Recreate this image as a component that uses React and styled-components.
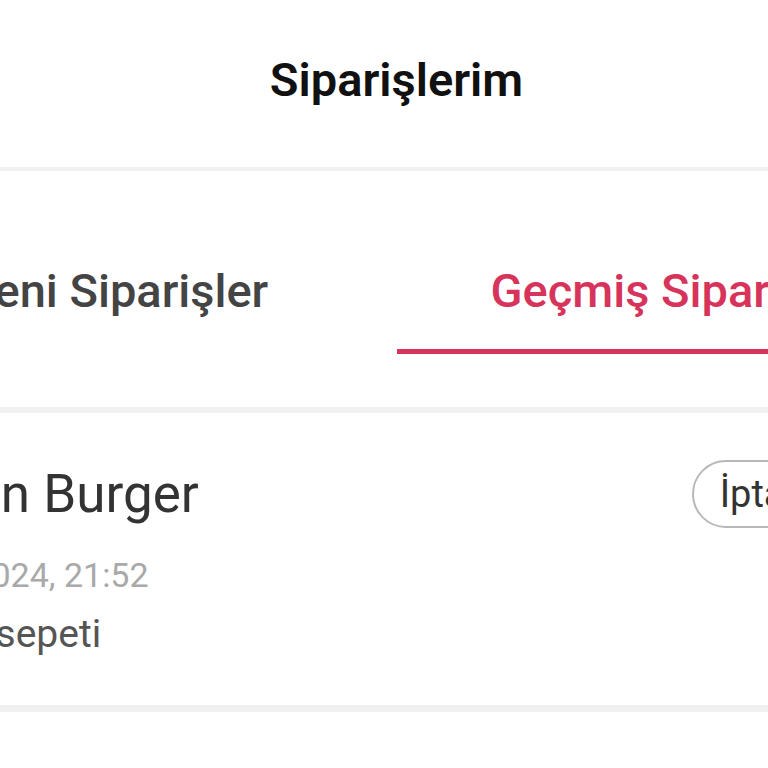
import React from 'react';
import styled, { createGlobalStyle } from 'styled-components';

const Global = createGlobalStyle`
    html, body {
        margin: 0;
        padding: 0;
        background: #ffffff;
        overflow: hidden;
    }
    body {
        font-family: Roboto, "Liberation Sans", sans-serif;
    }
`

// the screen is wider than the window, we only see the middle of it
const Screen = styled.div`
    width: 1115px;
    margin-left: -161px;
    background: #ffffff;
`

const Header = styled.header`
    box-sizing: border-box;
    height: 171px;
    padding-top: 56px;
    text-align: center;
    border-bottom: 4px solid #f1f1f1;
`

const Title = styled.h1`
    margin: 0;
    font-size: 47px;
    line-height: 47px;
    font-weight: 600;
    color: #111111;
`

const Tabs = styled.nav`
    display: flex;
`

const Tab = styled.div`
    flex: 1;
    padding: 96px 0 35px;
    text-align: center;
    font-size: 47px;
    line-height: 47px;
    font-weight: 500;
    color: ${p => (p.$active ? '#d7345b' : '#444444')};
    border-bottom: 5px solid ${p => (p.$active ? '#d7345b' : 'transparent')};
`

const List = styled.section`
    padding-top: 53px;
`

const Card = styled.article`
    padding: 47px 31px 51px 39px;
    border-top: 6px solid #f1f1f1;
    border-bottom: 7px solid #f0f0f0;
`

const Row = styled.div`
    display: flex;
    justify-content: space-between;
    align-items: flex-start;
`

const Info = styled.div`
    display: flex;
    flex-direction: column;
`

const Name = styled.div`
    margin-top: 8px;
    font-size: 53px;
    line-height: 53px;
    color: #333333;
`

const Date = styled.div`
    margin-top: 37px;
    font-size: 34px;
    line-height: 34px;
    color: #a9a9a9;
`

const Platform = styled.div`
    margin-top: 23px;
    font-size: 39px;
    line-height: 39px;
    color: #555555;
`

const Status = styled.span`
    box-sizing: border-box;
    height: 68px;
    padding: 0 26px;
    border: 2px solid #b8b8b8;
    border-radius: 34px;
    font-size: 38px;
    line-height: 64px;
    color: #333333;
    white-space: nowrap;
`

const orders = [
    {
        id: 1,
        name: 'Hasan Burger',
        date: '12.05.2024, 21:52',
        platform: 'Yemeksepeti',
        status: 'İptal Edildi',
    },
]

function App() {
    return (
        <>
            <Global />
            <Screen>
                <Header>
                    <Title>Siparişlerim</Title>
                </Header>
                <Tabs>
                    <Tab>Yeni Siparişler</Tab>
                    <Tab $active>Geçmiş Siparişler</Tab>
                </Tabs>
                <List>
                    {orders.map(o => (
                        <Card key={o.id}>
                            <Row>
                                <Info>
                                    <Name>{o.name}</Name>
                                    <Date>{o.date}</Date>
                                    <Platform>{o.platform}</Platform>
                                </Info>
                                <Status>{o.status}</Status>
                            </Row>
                        </Card>
                    ))}
                </List>
            </Screen>
        </>
    );
}

export default App;
